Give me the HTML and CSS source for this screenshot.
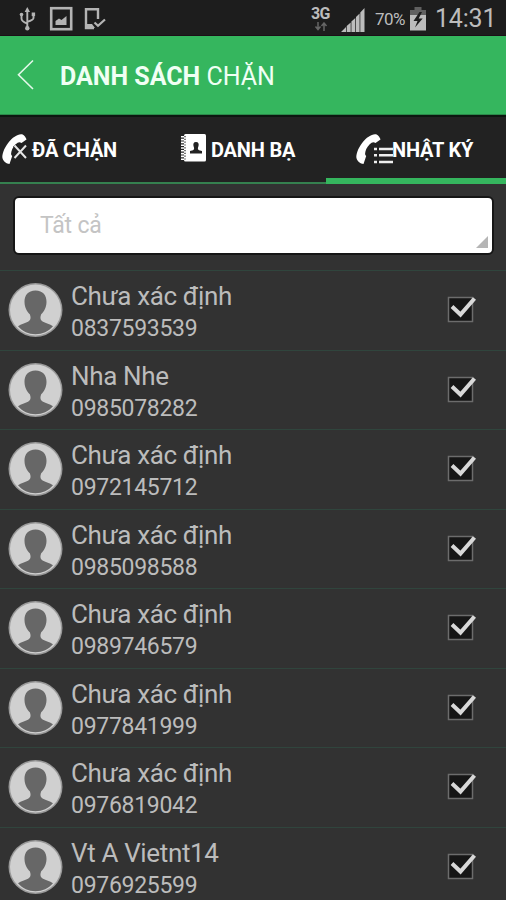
FILE: index.html
```html
<!DOCTYPE html>
<html lang="vi">
<head>
    <meta charset="UTF-8">
    <meta name="viewport" content="width=device-width, initial-scale=1.0">
    <title>Danh sách chặn</title>
    <link rel="stylesheet" href="styles.css">
</head>
<body>
    <!-- icon dùng chung -->
    <svg class="defs" width="0" height="0">
        <symbol id="avatar" viewBox="0 0 56 56">
            <circle cx="28.500" cy="28" r="27" fill="#999"/>
            <circle cx="28.500" cy="28" r="25.500" fill="#d0d0d0"/>
            <path d="M28.500 8.500C21 8.500 17.300 13.500 17.500 20C17.700 26 20 29.500 22.800 32.300C24 35.500 24 38.200 21 39.800C18 41.300 14.300 42 11 44.300C15.500 49.500 21.500 52.200 28.500 52.200C35.500 52.200 41.500 49.500 46 44.300C42.700 42 39 41.300 36 39.800C33 38.200 33 35.500 34.200 32.300C37 29.500 39.300 26 39.500 20C39.700 13.500 36 8.500 28.500 8.500Z" fill="#676767"/>
        </symbol>
        <symbol id="check" viewBox="0 0 32 30">
            <rect x="1.500" y="3.500" width="24" height="24" fill="#161616" stroke="#6c6c6c" stroke-width="1.500"/>
            <path d="M5 12.500L13.500 20.500L27.500 4.500" fill="none" stroke="#d8d8d8" stroke-width="4"/>
        </symbol>
        <symbol id="phone" viewBox="0 0 27 32">
            <path d="M25.500 6.500L20.500 10C18.500 8.600 17 9 14.700 11.200C11.500 14.300 10.300 17.800 10.100 20.500C10 21.800 10.600 22.300 11.200 23L8.500 31C5.500 31 2.500 28.500 1.500 25.300C.8 22 2.800 15.500 7.300 9.700C11.300 4.500 16 1.500 20 1.200C22.500 1 24.800 3.800 25.500 6.500Z" fill="#fff"/>
        </symbol>
    </svg>

    <div class="status-bar">
        <svg class="status-left" width="110" height="36" viewBox="0 0 110 36">
            <g fill="none" stroke="#b4b4b4" stroke-width="1.900">
                <path d="M27.300 10V28M21.500 14V18.500Q21.500 21.500 27.300 23.500M33.500 14.500V18Q33.500 20 27.300 21.800"/>
                <rect x="51.200" y="8.200" width="20" height="21" stroke-width="2.600"/>
                <path d="M98 19V9.200H86V28H94" stroke-width="2.400"/>
                <path d="M94.500 22.500L98 25.800L105 19.500" stroke-width="2.200"/>
            </g>
            <g fill="#b4b4b4">
                <path d="M27.300 7L30 12H24.600Z"/>
                <circle cx="27.300" cy="28.300" r="2.200"/>
                <circle cx="21.500" cy="14.500" r="1.800"/>
                <rect x="31.700" y="12.500" width="3.400" height="3.600"/>
                <path d="M55.500 25V21L59 18.500L61.500 20L66.500 16V25Z"/>
                <path d="M86 24H92L95 28H86Z"/>
            </g>
        </svg>
        <div class="network">
            <span>3G</span>
            <svg width="14" height="9" viewBox="0 0 14 9">
                <path d="M4 0V7M1.500 4.500L4 7.500L6.500 4.500M10 9V1.500M7.500 4L10 1L12.500 4" fill="none" stroke="#666" stroke-width="1.500"/>
            </svg>
        </div>
        <svg class="signal" width="24" height="24" viewBox="0 0 24 24" fill="#bcbcbc">
            <path d="M0 24L5 19V24ZM5.700 24V18L9.700 14.500V24ZM10.400 24V13.500L14.300 10V24ZM15 24V9L18.600 5.500V24ZM19.300 24V4.500L23.500 0V24Z"/>
        </svg>
        <span class="percent">70%</span>
        <svg class="battery" width="16" height="24" viewBox="0 0 16 24">
            <path d="M4.500 0H11.500V3H16V10H0V3H4.500Z" fill="#606060"/>
            <path d="M0 8H16V23.500H0Z" fill="#bcbcbc"/>
            <path d="M9.500 5L3.500 14H7.500L5 20.500L12.700 11.500H8.700L12 5Z" fill="#1d1d1d"/>
        </svg>
        <span class="clock">14:31</span>
    </div>

    <div class="header">
        <svg class="back" width="18" height="32" viewBox="0 0 18 32">
            <path d="M16 1.500L1.500 15.800L16 30" fill="none" stroke="#e3f8ea" stroke-width="1.600"/>
        </svg>
        <h1><b>DANH SÁCH</b> <span>CHẶN</span></h1>
    </div>

    <div class="tabs">
        <div class="tab tab-blocked">
            <svg width="27" height="32" viewBox="0 0 27 32">
                <use href="#phone" width="27" height="32"/>
                <path d="M13.500 12.500L25 25M25 12.500L13.500 25" stroke="#222" stroke-width="4"/>
                <path d="M13.500 12.500L25 25M25 12.500L13.500 25" stroke="#e6e6e6" stroke-width="2"/>
            </svg>
            <span>ĐÃ CHẶN</span>
        </div>
        <div class="tab tab-contacts">
            <svg width="26" height="30" viewBox="0 0 26 30">
                <rect x="3" y="1" width="22" height="27.500" rx="1.500" fill="#fff"/>
                <path d="M2 3V28" stroke="#fff" stroke-width="4" stroke-dasharray="1.600 1.200"/>
                <path d="M4 3V28" stroke="#555" stroke-width="1.600" stroke-dasharray="1.200 1.600"/>
                <path d="M15 9C12.500 9 12 11 12.500 13C13.300 15 13.500 16.500 12 17.200L9 18V20.500H21V18L18 17.200C16.500 16.500 16.700 15 17.500 13C18 11 17.500 9 15 9Z" fill="#222"/>
            </svg>
            <span>DANH BẠ</span>
        </div>
        <div class="tab tab-log active">
            <svg width="38" height="33" viewBox="0 0 38 33">
                <use href="#phone" width="27" height="32"/>
                <path d="M19 16H22M24 16H38M19 22.300H22M24 22.300H38M19 29H22M24 29H38" stroke="#eee" stroke-width="2.600"/>
            </svg>
            <span>NHẬT KÝ</span>
        </div>
    </div>

    <div class="filter">
        <div class="select">
            <span>Tất cả</span>
            <svg width="12" height="12" viewBox="0 0 12 12"><path d="M12 0V12H0Z" fill="#b5b5b5"/></svg>
        </div>
    </div>

    <div class="list">
        <div class="row">
            <svg class="avatar"><use href="#avatar"/></svg>
            <div class="info"><div class="name">Chưa xác định</div><div class="phone">0837593539</div></div>
            <svg class="check"><use href="#check"/></svg>
        </div>
        <div class="row">
            <svg class="avatar"><use href="#avatar"/></svg>
            <div class="info"><div class="name">Nha Nhe</div><div class="phone">0985078282</div></div>
            <svg class="check"><use href="#check"/></svg>
        </div>
        <div class="row">
            <svg class="avatar"><use href="#avatar"/></svg>
            <div class="info"><div class="name">Chưa xác định</div><div class="phone">0972145712</div></div>
            <svg class="check"><use href="#check"/></svg>
        </div>
        <div class="row">
            <svg class="avatar"><use href="#avatar"/></svg>
            <div class="info"><div class="name">Chưa xác định</div><div class="phone">0985098588</div></div>
            <svg class="check"><use href="#check"/></svg>
        </div>
        <div class="row">
            <svg class="avatar"><use href="#avatar"/></svg>
            <div class="info"><div class="name">Chưa xác định</div><div class="phone">0989746579</div></div>
            <svg class="check"><use href="#check"/></svg>
        </div>
        <div class="row">
            <svg class="avatar"><use href="#avatar"/></svg>
            <div class="info"><div class="name">Chưa xác định</div><div class="phone">0977841999</div></div>
            <svg class="check"><use href="#check"/></svg>
        </div>
        <div class="row">
            <svg class="avatar"><use href="#avatar"/></svg>
            <div class="info"><div class="name">Chưa xác định</div><div class="phone">0976819042</div></div>
            <svg class="check"><use href="#check"/></svg>
        </div>
        <div class="row">
            <svg class="avatar"><use href="#avatar"/></svg>
            <div class="info"><div class="name">Vt A Vietnt14</div><div class="phone">0976925599</div></div>
            <svg class="check"><use href="#check"/></svg>
        </div>
    </div>
</body>
</html>
```
FILE: styles.css
```css
* {
    box-sizing: border-box;
}
body {
    margin: 0;
    height: 900px;
    overflow: hidden;
    font-family: Roboto, "Noto Sans", sans-serif;
    background-color: #323232;
    color: #bcbcbc;
    white-space: nowrap;
}
svg {
    display: block;
    flex: none;
}
.defs {
    display: none;
}

/* thanh trạng thái */
.status-bar {
    display: flex;
    height: 36px;
    background-color: #1d1d1d;
    border-bottom: 1px solid #1c0f17;
}
.network {
    width: 20px;
    margin-left: 201px;
    padding-top: 6px;
    font-size: 16px;
    line-height: 16px;
    font-weight: bold;
    letter-spacing: -0.7px;
}
.network svg {
    margin-left: 3px;
}
.signal {
    margin: 8px 0 0 10px;
}
.percent {
    width: 32px;
    margin-left: 10px;
    font-size: 17px;
    line-height: 39px;
    letter-spacing: -0.6px;
}
.battery {
    margin: 7px 0 0 3px;
}
.clock {
    margin-left: 9px;
    font-size: 25px;
    line-height: 37px;
    letter-spacing: -0.2px;
}

/* tiêu đề */
.header {
    display: flex;
    align-items: center;
    height: 79px;
    padding-left: 17px;
    background-color: #35b65e;
    border-bottom: 1px solid #2b8a4a;
}
h1 {
    margin: 3px 0 0 25px;
    font-size: 25px;
    line-height: 30px;
    font-weight: normal;
    color: #f0fff4;
}

/* tab */
.tabs {
    display: flex;
    height: 69px;
    background-color: #222;
    border-top: 2px solid #0c1710;
}
.tab {
    display: flex;
    align-items: flex-start;
    padding-top: 16px;
    border-bottom: 2px solid #35804f;
    font-size: 20px;
    line-height: 35px;
    font-weight: bold;
    letter-spacing: -0.2px;
    color: #fff;
}
.tab-blocked {
    width: 163px;
    padding-left: 1px;
}
.tab-blocked span {
    margin-left: 4px;
}
.tab-contacts {
    width: 163px;
    padding-left: 18px;
}
.tab-contacts span {
    margin-left: 4px;
}
.tab-log {
    width: 180px;
    padding-left: 29px;
}
.tab-log span {
    margin-left: -1px;
}
.tab.active {
    border-bottom: 6px solid #35b65e;
}

/* bộ lọc */
.filter {
    height: 86px;
    padding: 12px 12px 0 13px;
}
.select {
    display: flex;
    justify-content: space-between;
    height: 59px;
    padding: 0 4px 0 25px;
    background-color: #fff;
    border: 2px solid #161616;
    border-radius: 6px;
    font-size: 23px;
    line-height: 56px;
    letter-spacing: -0.2px;
    color: #c4c4c4;
}
.select svg {
    margin-top: 38px;
}

/* danh sách */
.row {
    display: flex;
    height: 79.5px;
    padding-left: 7px;
    border-top: 1px solid #30453d;
}
.avatar {
    width: 56px;
    height: 56px;
    margin-top: 11px;
}
.info {
    width: 384px;
    padding: 10px 0 0 8px;
}
.name {
    font-size: 26px;
    line-height: 31px;
    letter-spacing: -0.35px;
}
.phone {
    font-size: 23px;
    line-height: 33px;
    letter-spacing: -0.3px;
}
.check {
    width: 32px;
    height: 30px;
    margin-top: 23px;
}
```
